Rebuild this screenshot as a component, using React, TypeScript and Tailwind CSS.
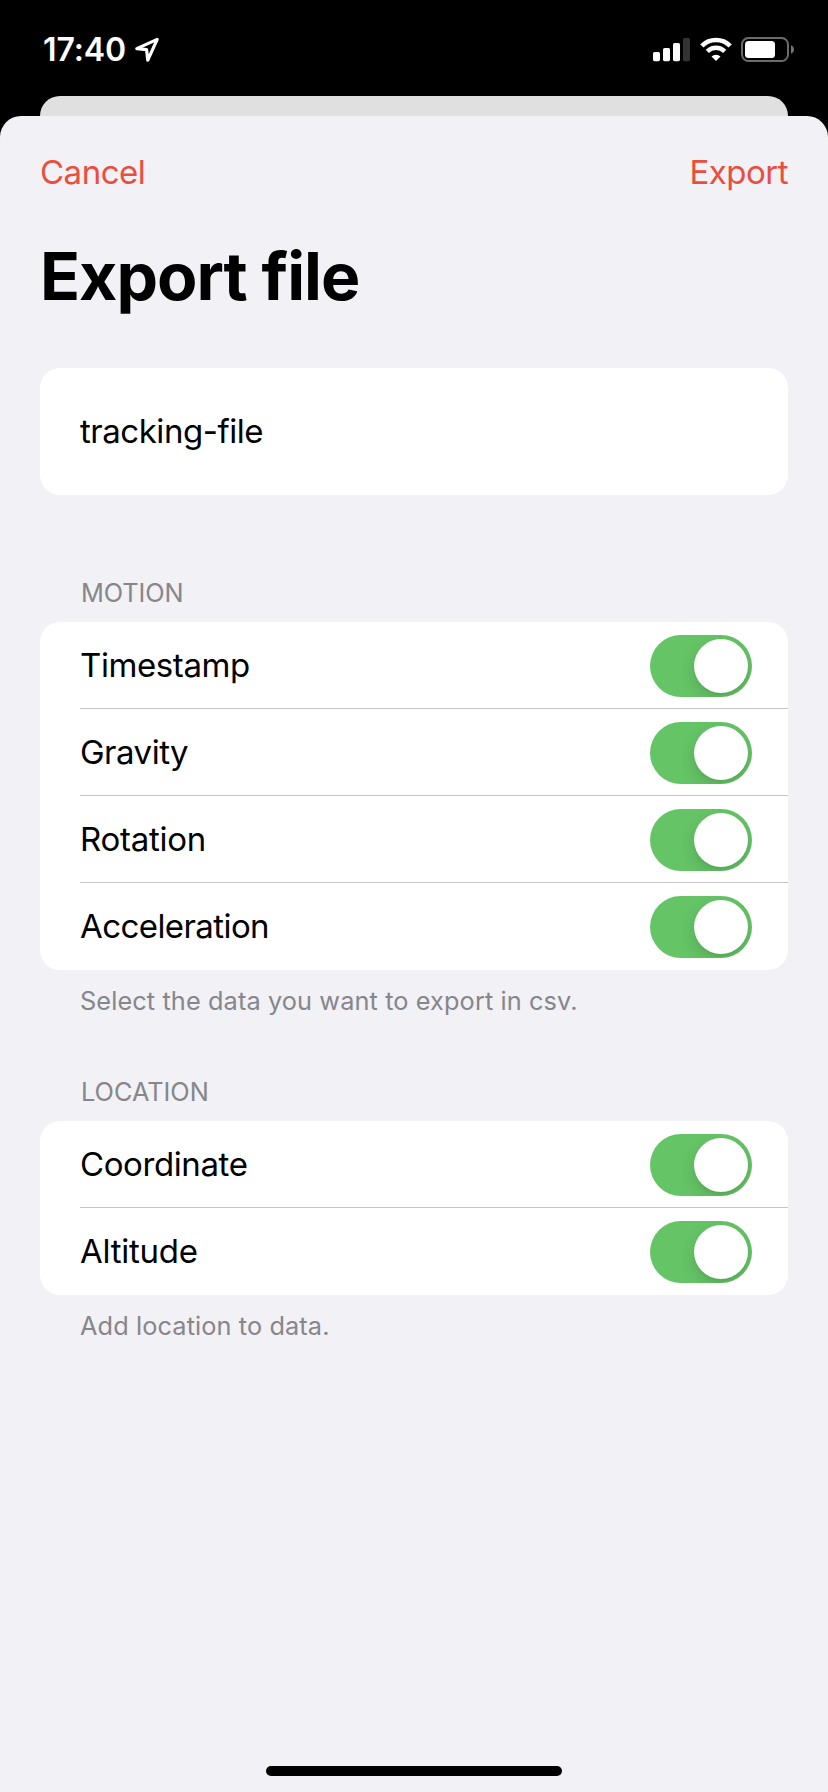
import { useState } from "react";

function LocationArrow() {
  return (
    <svg width="28" height="28" viewBox="0 0 28 28" fill="none">
      <path
        d="M24.2 3.4 3.8 12.6 13.6 13.7 14.8 24.2Z"
        stroke="white"
        strokeWidth="3.2"
        strokeLinejoin="round"
      />
    </svg>
  );
}

function Signal() {
  return (
    <svg width="37" height="24" viewBox="0 0 37 24">
      <rect x="0" y="14" width="7" height="9.2" rx="1.6" fill="white" />
      <rect x="10" y="10" width="7" height="13.2" rx="1.6" fill="white" />
      <rect x="20" y="5" width="7" height="18.2" rx="1.6" fill="white" />
      <rect x="30" y="0" width="7" height="23.2" rx="1.6" fill="#333333" />
    </svg>
  );
}

function Wifi() {
  return (
    <svg width="32" height="24" viewBox="0 0 32 24" fill="none" stroke="white">
      <path d="M1.8 8.9A20.2 20.2 0 0 1 30.2 8.9" strokeWidth="4.6" />
      <path d="M7.3 14.4A12.3 12.3 0 0 1 24.7 14.4" strokeWidth="4.4" />
      <path
        d="M16 24 11.5 19.5A6.4 6.4 0 0 1 20.5 19.5Z"
        fill="white"
        stroke="none"
      />
    </svg>
  );
}

function Battery() {
  return (
    <svg width="53" height="25" viewBox="0 0 53 25">
      <rect x="1" y="1" width="46" height="23" rx="6.5" fill="none" stroke="#6b6b6b" strokeWidth="2" />
      <rect x="4" y="4" width="30" height="17" rx="3.5" fill="white" />
      <path d="M50 8.2C52 9 53 10.6 53 12.5S52 16 50 16.8Z" fill="#757575" />
    </svg>
  );
}

function Toggle({ label }: { label: string }) {
  const [on, setOn] = useState(true);
  return (
    <button
      type="button"
      role="switch"
      aria-checked={on}
      aria-label={label}
      onClick={() => setOn(!on)}
      className={
        on
          ? "flex h-[62px] w-[102px] justify-end overflow-hidden rounded-full bg-[#65c466] p-1"
          : "flex h-[62px] w-[102px] justify-start overflow-hidden rounded-full bg-[#e9e9eb] p-1"
      }
    >
      <span className="size-[54px] rounded-full bg-white shadow-[0_6px_16px_rgba(0,0,0,0.14),0_2px_2px_rgba(0,0,0,0.04)]" />
    </button>
  );
}

type Item = { label: string; tracking: string };

function Section({
  title,
  titleTracking,
  items,
  footer,
}: {
  title: string;
  titleTracking: string;
  items: Item[];
  footer: string;
}) {
  return (
    <section className="px-10">
      <h2 className={`pl-[41px] text-[25.3px] leading-[32px] text-[#86868b] ${titleTracking}`}>{title}</h2>
      <ul className="mt-[13px] rounded-[20px] bg-white pl-10">
        {items.map((item, i) => (
          <li
            key={item.label}
            className={
              i < items.length - 1
                ? "flex h-[87px] items-start justify-between border-b border-[#c6c6c8] pt-[13px] pr-9"
                : "flex h-[87px] items-start justify-between pt-[13px] pr-9"
            }
          >
            <span className={`pt-[9px] text-[33px] leading-[42px] ${item.tracking}`}>{item.label}</span>
            <Toggle label={item.label} />
          </li>
        ))}
      </ul>
      <p className="mt-[15px] pl-10 text-[25.3px] leading-[32px] tracking-[0.11px] text-[#86868b]">{footer}</p>
    </section>
  );
}

const motion: Item[] = [
  { label: "Timestamp", tracking: "tracking-[-0.4px]" },
  { label: "Gravity", tracking: "tracking-[-0.5px]" },
  { label: "Rotation", tracking: "tracking-[-0.27px]" },
  { label: "Acceleration", tracking: "tracking-[-0.58px]" },
];

const location: Item[] = [
  { label: "Coordinate", tracking: "tracking-[-0.4px]" },
  { label: "Altitude", tracking: "tracking-[-0.27px]" },
];

export default function App() {
  return (
    <div className="flex h-[1792px] w-[828px] flex-col overflow-hidden bg-black font-['Inter','Liberation_Sans',sans-serif] text-black">
      <header className="flex h-24 shrink-0 items-start justify-between pt-[36px] pr-[34px] pl-[43px] text-white">
        <div className="flex items-start">
          <span className="w-[90px] text-[32px] leading-[28px] font-semibold tracking-[-0.1px]">17:40</span>
          <LocationArrow />
        </div>
        <div className="flex items-start pt-px">
          <span className="mt-px mr-[10px]"><Signal /></span>
          <span className="mr-[9px]"><Wifi /></span>
          <Battery />
        </div>
      </header>
      <div className="mx-10 h-5 shrink-0 rounded-t-[20px] bg-[#e0e0e0]" />
      <main className="flex flex-1 flex-col rounded-t-[21px] bg-[#f1f1f6]">
        <nav className="flex justify-between px-10 pt-[36px] text-[33px] leading-[40px] text-[#eb4e3d]">
          <button type="button" className="tracking-[-0.5px]">Cancel</button>
          <button type="button" className="tracking-[-0.5px]">Export</button>
        </nav>
        <h1 className="mt-[44px] pl-10 text-[66px] leading-[80px] font-bold tracking-[-1px]">Export file</h1>
        <div className="mx-10 mt-[52px] flex h-[127px] items-center rounded-[20px] bg-white pb-[2px] pl-10 text-[33px] leading-[42px] tracking-[-0.47px]">
          tracking-file
        </div>
        <div className="mt-[82px] flex flex-col gap-[59px]">
          <Section
            title="MOTION"
            titleTracking="tracking-[-0.1px]"
            items={motion}
            footer="Select the data you want to export in csv."
          />
          <Section
            title="LOCATION"
            titleTracking="tracking-[0px]"
            items={location}
            footer="Add location to data."
          />
        </div>
        <div className="mx-auto mt-auto mb-4 h-[10px] w-[296px] rounded-full bg-black" />
      </main>
    </div>
  );
}
